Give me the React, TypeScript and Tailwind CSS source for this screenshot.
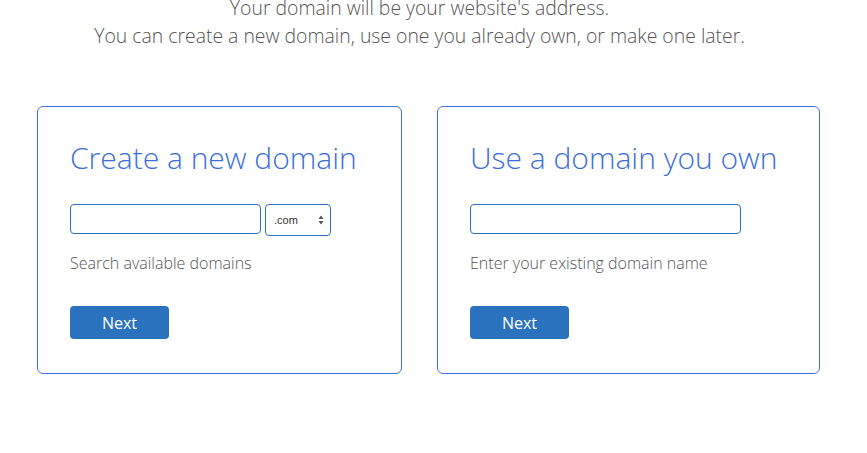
import React from "react";

function Arrows() {
  return (
    <svg width="6" height="10" viewBox="0 0 6 10" className="text-[#555]">
      <path d="M3 0.5 L5.5 4 H0.5 Z" fill="currentColor" />
      <path d="M3 9.5 L5.5 6 H0.5 Z" fill="currentColor" />
    </svg>
  );
}

export default function App() {
  const sans = { fontFamily: '"Open Sans", "Noto Sans", sans-serif' };
  return (
    <div className="w-[867px] h-[453px] bg-white overflow-hidden" style={sans}>
      <div className="mt-[-6px] pr-[28px] text-center text-[19.4px] leading-[28px] font-light text-[#555]">
        <p>Your domain will be your website's address.</p>
        <p>You can create a new domain, use one you already own, or make one later.</p>
      </div>
      <div className="flex gap-[35px] ml-[37px] mt-[56px]">
        <div className="w-[365px] h-[268px] border border-[#3b74d6] rounded-[6px] pl-[32px] pt-[36px]">
          <h2 className="text-[30px] leading-[30px] font-light text-[#3b6fd9]">Create a new domain</h2>
          <div className="flex items-start gap-[4px] mt-[31px]">
            <div className="w-[191px] h-[30px] border border-[#2f6fbf] rounded-[4px]" />
            <div className="w-[66px] h-[32px] border border-[#2f6fbf] rounded-[4px] flex items-center justify-between pl-[8px] pr-[6px]">
              <span className="text-[11px] text-[#333]" style={{ fontFamily: '"Liberation Sans", Arial, sans-serif' }}>.com</span>
              <Arrows />
            </div>
          </div>
          <p className="mt-[15px] text-[16px] leading-[24px] font-light text-[#555]">Search available domains</p>
          <button className="mt-[31px] w-[99px] h-[33px] rounded-[4px] bg-[#2a72bd] text-white text-[16px]">Next</button>
        </div>
        <div className="w-[383px] h-[268px] border border-[#3b74d6] rounded-[6px] pl-[32px] pt-[36px]">
          <h2 className="text-[30px] leading-[30px] font-light text-[#3b6fd9]">Use a domain you own</h2>
          <div className="mt-[31px]">
            <div className="w-[271px] h-[30px] border border-[#2f6fbf] rounded-[4px]" />
          </div>
          <p className="mt-[17px] text-[16px] leading-[24px] font-light text-[#555]">Enter your existing domain name</p>
          <button className="mt-[31px] w-[99px] h-[33px] rounded-[4px] bg-[#2a72bd] text-white text-[16px]">Next</button>
        </div>
      </div>
    </div>
  );
}
